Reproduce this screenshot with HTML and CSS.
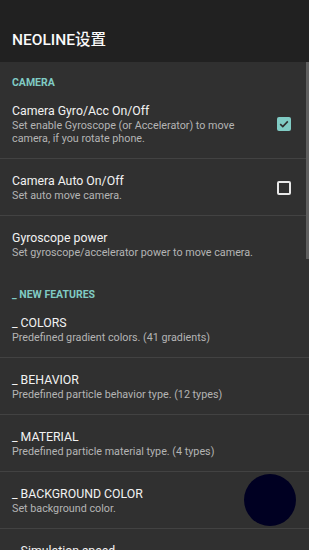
FILE: index.html
```html
<!DOCTYPE html>
<html lang="zh">
<head>
    <meta charset="UTF-8">
    <meta name="viewport" content="width=device-width, initial-scale=1.0">
    <title>NEOLINE设置</title>
    <link rel="stylesheet" href="styles.css">
</head>
<body>
    <div class="app">
        <header class="toolbar">
            <h1>NEOLINE设置</h1>
        </header>

        <div class="prefs">
            <div class="scroll-thumb"></div>

            <div class="category">CAMERA</div>

            <div class="pref">
                <div class="pref-text">
                    <div class="pref-title">Camera Gyro/Acc On/Off</div>
                    <div class="pref-summary">Set enable Gyroscope (or Accelerator) to move camera, if you rotate phone.</div>
                </div>
                <div class="checkbox checked">
                    <svg viewBox="0 0 14 14" width="14" height="14">
                        <path d="M3.2 7.2 L5.8 9.6 L10.8 4.4" fill="none" stroke="#2e2e2e" stroke-width="1.6"/>
                    </svg>
                </div>
            </div>

            <div class="pref">
                <div class="pref-text">
                    <div class="pref-title">Camera Auto On/Off</div>
                    <div class="pref-summary">Set auto move camera.</div>
                </div>
                <div class="checkbox"></div>
            </div>

            <div class="pref last">
                <div class="pref-text">
                    <div class="pref-title">Gyroscope power</div>
                    <div class="pref-summary">Set gyroscope/accelerator power to move camera.</div>
                </div>
            </div>

            <div class="category">_ NEW FEATURES</div>

            <div class="pref">
                <div class="pref-text">
                    <div class="pref-title">_ COLORS</div>
                    <div class="pref-summary">Predefined gradient colors. (41 gradients)</div>
                </div>
            </div>

            <div class="pref">
                <div class="pref-text">
                    <div class="pref-title">_ BEHAVIOR</div>
                    <div class="pref-summary">Predefined particle behavior type. (12 types)</div>
                </div>
            </div>

            <div class="pref">
                <div class="pref-text">
                    <div class="pref-title">_ MATERIAL</div>
                    <div class="pref-summary">Predefined particle material type. (4 types)</div>
                </div>
            </div>

            <div class="pref">
                <div class="pref-text">
                    <div class="pref-title">_ BACKGROUND COLOR</div>
                    <div class="pref-summary">Set background color.</div>
                </div>
                <div class="color-swatch"></div>
            </div>

            <div class="pref">
                <div class="pref-text">
                    <div class="pref-title">_ Simulation speed</div>
                    <div class="pref-summary">Set particle simulation speed.</div>
                </div>
            </div>
        </div>
    </div>
</body>
</html>
```

FILE: styles.css
```css
html, body {
    margin: 0;
    padding: 0;
    height: 100%;
    overflow: hidden;
}

body {
    font-family: Roboto, "Noto Sans CJK SC", sans-serif;
    background-color: #303030;
    color: #fff;
}

.app {
    display: flex;
    flex-direction: column;
    height: 550px;
}

.toolbar {
    background-color: #212121;
    height: 62px;
    flex-shrink: 0;
    display: flex;
    align-items: flex-end;
    padding: 0 12px;
    box-sizing: border-box;
}

.toolbar h1 {
    margin: 0 0 12px;
    font-size: 15.5px;
    font-weight: 500;
    line-height: 20px;
    color: #fafafa;
}

.prefs {
    position: relative;
    flex: 1;
    overflow: hidden;
}

.scroll-thumb {
    position: absolute;
    top: 0;
    right: 0;
    width: 3px;
    height: 197px;
    background-color: #5e5e5e;
}

.category {
    padding: 14px 12px 0;
    font-size: 10.5px;
    font-weight: 700;
    line-height: 13px;
    color: #80cbc4;
}

.category + .pref {
    margin-top: 0;
}

.pref {
    display: flex;
    align-items: center;
    padding: 14px 0 13px 12px;
    border-bottom: 1px solid #424242;
}

.pref.last {
    border-bottom: none;
    padding-bottom: 15px;
}

.pref-text {
    flex: 1;
    min-width: 0;
    padding-right: 16px;
}

.pref-title {
    font-size: 12.3px;
    line-height: 16px;
    color: #f2f2f2;
}

.pref-summary {
    font-size: 10.75px;
    line-height: 13px;
    color: #b4b4b4;
}

.checkbox {
    flex-shrink: 0;
    width: 14px;
    height: 14px;
    box-sizing: border-box;
    border: 2px solid #e8e8e8;
    border-radius: 2px;
    margin-right: 18px;
    margin-left: 24px;
}

.checkbox.checked {
    border: none;
    background-color: #80cbc4;
}

.checkbox svg {
    display: block;
}

.color-swatch {
    flex-shrink: 0;
    width: 52px;
    height: 52px;
    border-radius: 50%;
    background-color: #000022;
    margin: -14px 13px -13px 0;
}
```
